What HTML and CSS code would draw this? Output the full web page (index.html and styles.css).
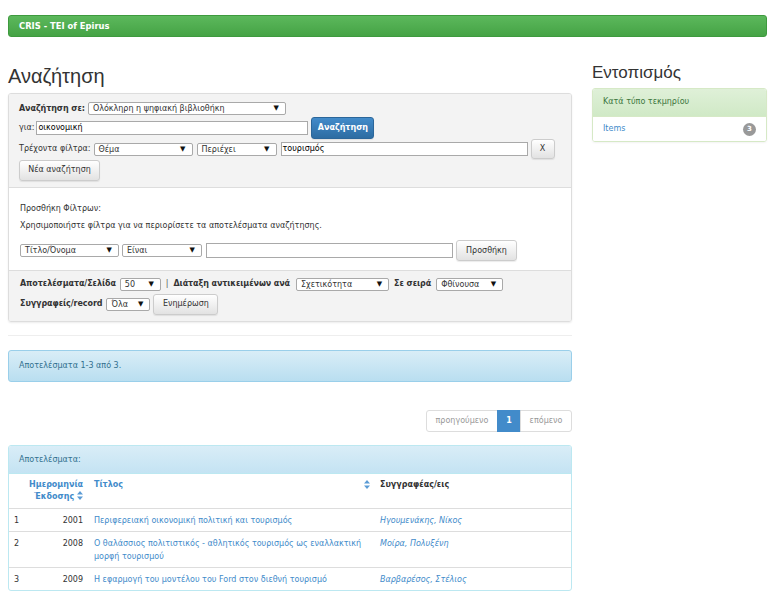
FILE: index.html
```html
<!DOCTYPE html>
<html lang="el">
<head>
<meta charset="utf-8">
<title>CRIS - TEI of Epirus</title>
<link rel="stylesheet" href="styles.css">
</head>
<body>
<div class="navbar">CRIS - TEI of Epirus</div>
<div class="container">
  <div class="main">
    <h1 class="page-title">Αναζήτηση</h1>
    <div class="search-panel">
      <div class="sp-top">
        <div class="row r1">
          <label class="lbl bold">Αναζήτηση σε:</label>
          <span class="sel sel-scope"><span>Ολόκληρη η ψηφιακή βιβλιοθήκη</span><i>▼</i></span>
        </div>
        <div class="row r2">
          <label class="lbl">για:</label>
          <span class="inp inp-query">οικονομική</span>
          <span class="btn btn-primary btn-search">Αναζήτηση</span>
        </div>
        <div class="row r3">
          <label class="lbl">Τρέχοντα φίλτρα:</label>
          <span class="sel sel-field"><span>Θέμα</span><i>▼</i></span>
          <span class="sel sel-op"><span>Περιέχει</span><i>▼</i></span>
          <span class="inp inp-filter">τουρισμός</span>
          <span class="btn btn-x">X</span>
        </div>
        <div class="row r4">
          <span class="btn btn-new">Νέα αναζήτηση</span>
        </div>
      </div>
      <div class="sp-mid">
        <p class="mid-l1">Προσθήκη Φίλτρων:</p>
        <p class="mid-l2">Χρησιμοποιήστε φίλτρα για να περιορίσετε τα αποτελέσματα αναζήτησης.</p>
        <div class="row r5">
          <span class="sel sel-title"><span>Τίτλο/Όνομα</span><i>▼</i></span>
          <span class="sel sel-is"><span>Είναι</span><i>▼</i></span>
          <span class="inp inp-add"></span>
          <span class="btn btn-add">Προσθήκη</span>
        </div>
      </div>
      <div class="sp-foot">
        <div class="row r6">
          <label class="lbl bold">Αποτελέσματα/Σελίδα</label>
          <span class="sel sel-rpp"><span>50</span><i>▼</i></span>
          <span class="pipe">|</span>
          <label class="lbl bold">Διάταξη αντικειμένων ανά</label>
          <span class="sel sel-sort"><span>Σχετικότητα</span><i>▼</i></span>
          <label class="lbl bold">Σε σειρά</label>
          <span class="sel sel-order"><span>Φθίνουσα</span><i>▼</i></span>
        </div>
        <div class="row r7">
          <label class="lbl bold">Συγγραφείς/record</label>
          <span class="sel sel-auth"><span>Όλα</span><i>▼</i></span>
          <span class="btn btn-update">Ενημέρωση</span>
        </div>
      </div>
    </div>
    <hr class="sep">
    <div class="alert-info">Αποτελέσματα 1-3 από 3.</div>
    <div class="pager-wrap">
      <ul class="pager">
        <li class="pg disabled">προηγούμενο</li>
        <li class="pg active">1</li>
        <li class="pg disabled">επόμενο</li>
      </ul>
    </div>
    <div class="results-panel">
      <div class="rp-heading">Αποτελέσματα:</div>
      <table class="rtable">
        <colgroup>
          <col class="c-num"><col class="c-date"><col class="c-title"><col class="c-auth">
        </colgroup>
        <thead>
          <tr>
            <th></th>
            <th class="th-date"><a>Ημερομηνία<br>Έκδοσης <svg class="sort" width="6" height="9" viewBox="0 0 6 9"><path d="M3 0L6 3.6H0Z M3 9L0 5.4H6Z"/></svg></a></th>
            <th><div class="th-title"><a>Τίτλος</a><svg class="sort" width="6" height="9" viewBox="0 0 6 9"><path d="M3 0L6 3.6H0Z M3 9L0 5.4H6Z"/></svg></div></th>
            <th class="th-auth">Συγγραφέας/εις</th>
          </tr>
        </thead>
        <tbody>
          <tr>
            <td>1</td><td class="td-date">2001</td>
            <td><a>Περιφερειακή οικονομική πολιτική και τουρισμός</a></td>
            <td><a class="auth">Ηγουμενάκης, Νίκος</a></td>
          </tr>
          <tr>
            <td>2</td><td class="td-date">2008</td>
            <td><a>Ο θαλάσσιος πολιτιστικός - αθλητικός τουρισμός ως εναλλακτική μορφή τουρισμού</a></td>
            <td><a class="auth">Μοίρα, Πολυξένη</a></td>
          </tr>
          <tr>
            <td>3</td><td class="td-date">2009</td>
            <td><a>Η εφαρμογή του μοντέλου του Ford στον διεθνή τουρισμό</a></td>
            <td><a class="auth">Βαρβαρέσος, Στέλιος</a></td>
          </tr>
        </tbody>
      </table>
    </div>
  </div>
  <div class="side">
    <h2 class="side-title">Εντοπισμός</h2>
    <div class="side-panel">
      <div class="sp-heading">Κατά τύπο τεκμηρίου</div>
      <div class="sp-item"><a>Items</a><span class="badge">3</span></div>
    </div>
  </div>
</div>
</body>
</html>
```

FILE: styles.css
```css
* { box-sizing: border-box; }
body {
  margin: 0;
  font-family: "DejaVu Sans", Verdana, sans-serif;
  font-size: 8px;
  line-height: 12px;
  color: #333;
  background: #fff;
}
a { color: #428bca; text-decoration: none; }

.navbar {
  margin: 15px 3px 0 8px;
  height: 22px;
  line-height: 21px;
  padding-left: 10px;
  color: #fff;
  font-weight: bold;
  font-size: 8.4px;
  background: linear-gradient(#5cb85c, #45a345);
  border: 1px solid #3e9a3e;
  border-radius: 3px;
}

.container {
  display: flex;
  gap: 20px;
  padding: 0 3px 0 8px;
}
.main { width: 564px; }
.side { width: 175px; }

.page-title {
  margin: 27px 0 5px;
  font-family: "Liberation Sans", Arial, sans-serif;
  font-weight: normal;
  font-size: 20px;
  line-height: 24px;
  color: #333;
}

.search-panel {
  border: 1px solid #ddd;
  border-radius: 3px;
  box-shadow: 0 1px 2px rgba(0,0,0,.08);
  overflow: hidden;
}
.sp-top {
  background: #f3f3f3;
  padding: 7px 10px 6px;
}
.row { display: flex; align-items: center; }
.r1 { height: 15px; gap: 3px; }
.r2 { height: 23px; gap: 3px; }
.r2 .lbl { margin-right: -1px; }
.r3 { height: 20px; gap: 4px; }
.r3 .sel-field { margin-left: -1px; }
.r3 .btn-x { margin-left: -1px; }
.r4 { height: 22px; }

.lbl { white-space: nowrap; }
.bold { font-weight: bold; letter-spacing: -0.08px; }

.sel {
  display: inline-flex;
  align-items: center;
  justify-content: space-between;
  height: 13px;
  padding: 0 6px 0 4px;
  background: #fff;
  border: 1px solid #a9a9a9;
  border-radius: 2px;
  white-space: nowrap;
  line-height: 11px;
}
.sel i {
  font-style: normal;
  font-size: 7px;
  color: #111;
}
.sel-scope { width: 198px; }
.sel-field { width: 99px; }
.sel-op { width: 80px; }
.sel-title { width: 99px; }
.sel-is { width: 80px; }
.sel-rpp { width: 41px; }
.sel-sort { width: 93px; }
.sel-order { width: 67px; }
.sel-auth { width: 44px; }

.inp {
  display: inline-block;
  height: 14px;
  line-height: 12px;
  padding: 0 1px;
  background: #fff;
  border: 1px solid #a9a9a9;
  color: #000;
}
.inp-query { width: 272px; }
.inp-filter { width: 247px; }
.inp-add { width: 247px; }

.btn {
  display: inline-flex;
  align-items: center;
  justify-content: center;
  height: 21px;
  border: 1px solid #ccc;
  border-radius: 3px;
  background: linear-gradient(#fff, #e2e2e2);
  box-shadow: 0 1px 1px rgba(0,0,0,.08);
  color: #333;
  white-space: nowrap;
}
.btn-primary {
  background: linear-gradient(#428bca, #2d6ca2);
  border-color: #2b669a;
  color: #fff;
  font-weight: bold;
}
.btn-search { width: 63px; height: 22px; }
.btn-x { width: 24px; height: 20px; }
.btn-new { width: 81px; }
.btn-add { width: 61px; }
.btn-update { width: 65px; }

.sp-mid {
  border-top: 1px solid #ddd;
  background: #fff;
  padding: 13px 10px 9px 11px;
}
.sp-mid p { margin: 0; line-height: 16px; }
.mid-l2 { margin-top: 1px !important; }
.r5 { height: 21px; gap: 3px; margin-top: 6px; }
.r5 .inp-add { height: 15px; margin-left: 1px; }

.sp-foot {
  border-top: 1px solid #ddd;
  background: #f3f3f3;
  padding: 6px 10px 6px 11px;
}
.r6 { height: 14px; gap: 4px; }
.r6 .pipe { margin: 0 1px; color: #555; }
.r6 .sel-sort { margin-left: 2px; }
.r6 .sel-order { margin-left: 1px; }
.r6 .sel-sort + .lbl { margin-left: 1px; }
.r7 { height: 22px; gap: 4px; margin-top: 2px; }
.r7 .btn-update { margin-left: -1px; }

.sep {
  margin: 13px 0 14px;
  border: 0;
  border-top: 1px solid #eee;
  height: 0;
}

.alert-info {
  height: 32px;
  line-height: 30px;
  padding: 0 10px;
  border: 1px solid #9acfea;
  border-radius: 3px;
  background: linear-gradient(#d9edf7, #b9def0);
  color: #31708f;
}

.pager-wrap {
  display: flex;
  justify-content: flex-end;
  margin-top: 28px;
}
.pager {
  display: flex;
  list-style: none;
  margin: 0;
  padding: 0;
}
.pg {
  height: 22px;
  line-height: 20px;
  border: 1px solid #ddd;
  margin-left: -1px;
  text-align: center;
  color: #999;
  background: #fff;
}
.pg:first-child { width: 72px; border-radius: 3px 0 0 3px; }
.pg.active {
  width: 24px;
  background: #428bca;
  border-color: #428bca;
  color: #fff;
  font-weight: bold;
}
.pg:last-child { width: 52px; border-radius: 0 3px 3px 0; }

.results-panel {
  margin-top: 13px;
  border: 1px solid #bce8f1;
  border-radius: 3px;
  overflow: hidden;
}
.rp-heading {
  height: 28px;
  line-height: 27px;
  padding: 0 10px;
  border-bottom: 1px solid #bce8f1;
  background: linear-gradient(#d9edf7, #c4e3f3);
  color: #31708f;
}
.rtable {
  width: 100%;
  border-collapse: collapse;
  table-layout: fixed;
}
.c-num { width: 14px; }
.c-date { width: 66px; }
.c-title { width: 286px; }
.rtable th {
  padding: 5px 5px 5px;
  text-align: left;
  vertical-align: top;
  font-weight: bold;
  line-height: 12px;
}
.rtable th a { color: #428bca; }
.th-date { text-align: right !important; padding-right: 6px !important; white-space: nowrap; }
.th-title { display: flex; justify-content: space-between; align-items: flex-start; }
.th-title .sort { margin-top: 1px; }
.sort { fill: #5b9bd5; vertical-align: -1px; }
.th-auth { color: #333; }
.rtable td {
  padding: 5px 5px 4px;
  line-height: 13px;
  border-top: 1px solid #ddd;
  vertical-align: top;
}
.rtable td.td-date { text-align: right; padding-right: 6px; }
.auth { font-style: italic; }

.side-title {
  margin: 26px 0 5px;
  font-family: "Liberation Sans", Arial, sans-serif;
  font-weight: normal;
  font-size: 17px;
  line-height: 20px;
  color: #333;
}
.side-panel {
  border: 1px solid #d6e9c6;
  border-radius: 3px;
  overflow: hidden;
  box-shadow: 0 1px 2px rgba(0,0,0,.05);
}
.sp-heading {
  height: 28px;
  line-height: 26px;
  padding: 0 10px;
  border-bottom: 1px solid #d6e9c6;
  background: linear-gradient(#dff0d8, #d0e9c6);
  color: #3c763d;
}
.sp-item {
  display: flex;
  align-items: center;
  justify-content: space-between;
  height: 24px;
  padding: 0 10px;
  background: #fff;
}
.badge {
  width: 13px;
  height: 13px;
  border-radius: 50%;
  background: #999;
  color: #fff;
  font-weight: bold;
  font-size: 7px;
  line-height: 13px;
  text-align: center;
}
```
